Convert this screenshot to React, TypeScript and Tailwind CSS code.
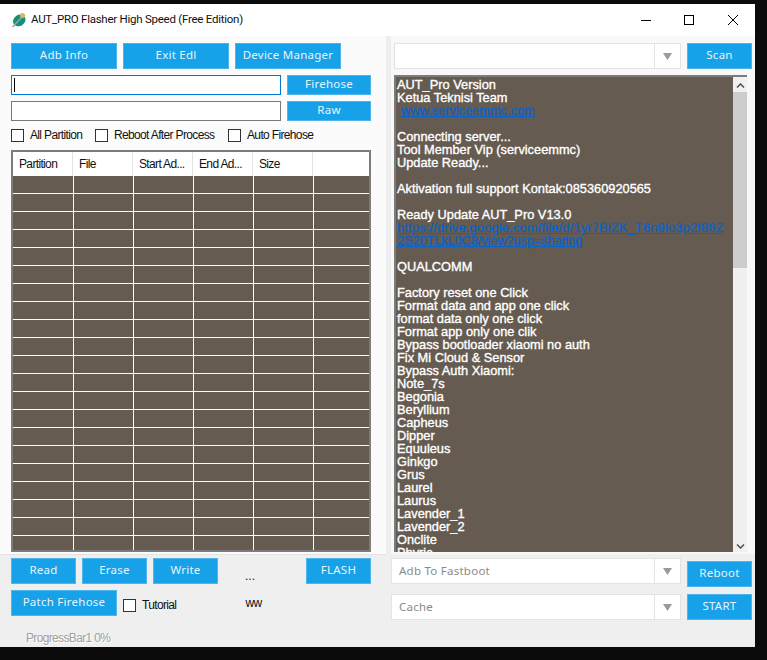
import React from 'react';

const title = "font-['Roboto','Liberation_Sans',sans-serif]";
const body = "font-['Liberation_Sans',sans-serif]";
const narrow = `text-[12px] leading-[14px] tracking-[-0.65px] ${body}`;
const ui = "text-[11.5px] tracking-[0.25px] font-['Noto_Sans',sans-serif]";

function Btn({ text, className }: { text: string; className: string }) {
  return (
    <button className={`flex items-center justify-center whitespace-nowrap pb-[2px] bg-[#16a1e9] border border-[#4fb6ec] text-[#e6f5fd] ${ui} ${className}`}>
      {text}
    </button>
  );
}

function Check({ label, className }: { label: string; className?: string }) {
  return (
    <div className={`flex items-center gap-[6px] ${className ?? ''}`}>
      <span className="block w-[13px] h-[13px] border border-[#333] bg-white" />
      <span className={`text-[#111] ${narrow}`}>{label}</span>
    </div>
  );
}

function Combo({ text, className }: { text?: string; className: string }) {
  return (
    <div className={`flex h-[26px] bg-white border border-[#e3e3e3] ${className}`}>
      <div className={`flex-1 flex items-center pl-[7px] text-[#8a8a8a] ${ui}`}>{text}</div>
      <div className="w-[26px] border-l border-[#e3e3e3] flex items-center justify-center">
        <svg width="9" height="7" viewBox="0 0 9 7"><path d="M0 0h9L4.5 7z" fill="#9a9a9a" /></svg>
      </div>
    </div>
  );
}

const cols = ['Partition', 'File', 'Start Ad...', 'End Ad...', 'Size', ''];

const log: { t: string; link?: string; indent?: boolean }[] = [
  { t: 'AUT_Pro Version' },
  { t: 'Ketua Teknisi Team' },
  { t: 'www.serviceemmc.com', link: 'tracking-[0px]', indent: true },
  { t: '' },
  { t: 'Connecting server...' },
  { t: 'Tool Member Vip (serviceemmc)' },
  { t: 'Update Ready...' },
  { t: '' },
  { t: 'Aktivation full support Kontak:085360920565' },
  { t: '' },
  { t: 'Ready Update AUT_Pro V13.0' },
  { t: 'https://drive.google.com/file/d/1yr7BiZK_T6n9lo3p2f86Z', link: 'tracking-[0.2px]' },
  { t: '2S20TLkL0C8/view?usp=sharing', link: 'tracking-[-0.1px]' },
  { t: '' },
  { t: 'QUALCOMM' },
  { t: '' },
  { t: 'Factory reset one Click' },
  { t: 'Format data and app one click' },
  { t: 'format data only one click' },
  { t: 'Format app only one clik' },
  { t: 'Bypass bootloader xiaomi no auth' },
  { t: 'Fix Mi Cloud & Sensor' },
  { t: 'Bypass Auth Xiaomi:' },
  { t: 'Note_7s' },
  { t: 'Begonia' },
  { t: 'Beryllium' },
  { t: 'Capheus' },
  { t: 'Dipper' },
  { t: 'Equuleus' },
  { t: 'Ginkgo' },
  { t: 'Grus' },
  { t: 'Laurel' },
  { t: 'Laurus' },
  { t: 'Lavender_1' },
  { t: 'Lavender_2' },
  { t: 'Onclite' },
  { t: 'Phyric' },
];

export default function App() {
  return (
    <div className="w-[767px] h-[660px] bg-[#0b0b0b] overflow-hidden pt-[4px]">
      <div className="w-[755px] h-[643px] flex flex-col bg-[#efefef]">
        {/* title bar */}
        <div className="h-[32px] bg-white flex items-center shrink-0">
          <svg className="ml-[11px]" width="16" height="16" viewBox="0 0 16 16">
            <ellipse cx="8" cy="8.5" rx="6.5" ry="5.5" fill="#12907c" transform="rotate(-35 8 8)" />
            <path d="M1.5 15L11 5" stroke="#9aa59a" strokeWidth="1.5" />
            <circle cx="11.5" cy="3.5" r="2.6" fill="#d4b56c" />
          </svg>
          <span className={`ml-[4px] text-[11.5px] tracking-[-0.25px] text-[#111] ${title}`}>AUT_PRO Flasher High Speed (Free Edition)</span>
          <div className="ml-auto flex items-center">
            <span className="block w-[10px] h-px bg-black mr-[33px]" />
            <span className="block w-[10px] h-[10px] border border-black mr-[34px]" />
            <svg className="mr-[17px]" width="10" height="10" viewBox="0 0 10 10"><path d="M0 0l10 10M10 0L0 10" stroke="#000" strokeWidth="1" /></svg>
          </div>
        </div>

        <div className="flex flex-1">
          {/* left */}
          <div className="w-[386px] flex flex-col shrink-0">
            <div className="h-[519px] bg-[#fbfbfb] border-b border-[#e2e2e2] pl-[11px] pt-[7px]">
              <div className="flex gap-[6px]">
                <Btn text="Adb Info" className="w-[106px] h-[26px]" />
                <Btn text="Exit Edl" className="w-[106px] h-[26px]" />
                <Btn text="Device Manager" className="w-[106px] h-[26px]" />
              </div>
              <div className="flex gap-[6px] mt-[6px]">
                <div className="w-[270px] h-[20px] border border-[#0078d7] bg-white flex items-center pl-[2px]">
                  <span className="block w-px h-[14px] bg-black" />
                </div>
                <Btn text="Firehose" className="w-[84px] h-[20px]" />
              </div>
              <div className="flex gap-[6px] mt-[6px]">
                <div className="w-[270px] h-[20px] border border-[#7a7a7a] bg-white" />
                <Btn text="Raw" className="w-[84px] h-[20px]" />
              </div>
              <div className="flex h-[14px] mt-[7px]">
                <Check label="All Partition" className="w-[84px]" />
                <Check label="Reboot After Process" className="w-[133px]" />
                <Check label="Auto Firehose" />
              </div>
              {/* partition table */}
              <div className="w-[360px] h-[402px] mt-[8px] border-2 border-[#7c7c7c] bg-[#655b50] overflow-hidden">
                <div className="flex h-[24px] bg-white">
                  {cols.map((c, i) => (
                    <div key={i} className={`w-[60px] shrink-0 border-r border-[#e3e3e3] pl-[6px] flex items-center text-[#111] ${narrow}`}>{c}</div>
                  ))}
                </div>
                {Array.from({ length: 21 }).map((_, r) => (
                  <div key={r} className="flex h-[18px] pl-[1px] border-b border-[#fafafa]">
                    {cols.map((_, i) => (
                      <div key={i} className="w-[60px] shrink-0 border-r border-[#fafafa]" />
                    ))}
                  </div>
                ))}
              </div>
            </div>
            {/* bottom left */}
            <div className="pl-[11px] pt-[3px] flex-1">
              <div className="flex">
                <Btn text="Read" className="w-[65px] h-[26px] mr-[6px]" />
                <Btn text="Erase" className="w-[65px] h-[26px] mr-[6px]" />
                <Btn text="Write" className="w-[65px] h-[26px]" />
                <span className={`ml-[27px] mt-[11px] text-[12px] leading-[14px] text-[#111] ${body}`}>...</span>
                <Btn text="FLASH" className="w-[65px] h-[26px] ml-auto mr-[15px]" />
              </div>
              <div className="flex mt-[6px]">
                <Btn text="Patch Firehose" className="w-[106px] h-[26px]" />
                <Check label="Tutorial" className="ml-[6px] mt-[5px] h-[20px]" />
                <span className={`ml-[69px] mt-[6px] text-[#111] ${narrow}`}>ww</span>
              </div>
              <div className={`ml-[15px] mt-[15px] text-[#a0a0a0] [text-shadow:1px_1px_0_#fff] ${narrow}`}>ProgressBar1 0%</div>
            </div>
          </div>

          {/* divider */}
          <div className="w-[5px] h-[518px] bg-[#eeeeee] shrink-0" />

          {/* right */}
          <div className="flex-1 flex flex-col">
            <div className="h-[518px] bg-[#f8f8f8] pt-[7px] pl-[3px]">
              <div className="flex gap-[6px]">
                <Combo className="w-[287px]" />
                <Btn text="Scan" className="w-[65px] h-[26px]" />
              </div>
              <div className="w-[353px] h-[477px] mt-[6px] bg-[#655b50] border-t-2 border-l-2 border-[#7c7c7c] flex overflow-hidden">
                <div className={`flex-1 pt-[1px] pl-[1px] text-[12.8px] leading-[13px] text-white [-webkit-text-stroke:0.35px_#fff] ${body}`}>
                  {log.map((l, i) => (
                    <div key={i} className={`h-[13px] whitespace-pre ${l.link ? `text-[#0a63c9] [-webkit-text-stroke:0.3px_#0a63c9] underline ${l.link}` : ''} ${l.indent ? 'pl-[4px]' : ''}`}>{l.t}</div>
                  ))}
                </div>
                <div className="w-[14px] shrink-0 bg-[#f0f0f0] flex flex-col items-center">
                  <svg className="mt-[6px] mb-[4px]" width="9" height="5" viewBox="0 0 9 5"><path d="M1 4.5l3.5-3.5 3.5 3.5" fill="none" stroke="#505050" strokeWidth="1.5" /></svg>
                  <div className="w-[14px] h-[176px] bg-[#cdcdcd]" />
                  <div className="flex-1" />
                  <svg className="mb-[3px]" width="9" height="5" viewBox="0 0 9 5"><path d="M1 .5L4.5 4 8 .5" fill="none" stroke="#505050" strokeWidth="1.5" /></svg>
                </div>
              </div>
            </div>
            <div className="pt-[4px] flex">
              <div className="flex flex-col gap-[10px]">
                <Combo text="Adb To Fastboot" className="w-[290px]" />
                <Combo text="Cache" className="w-[290px]" />
              </div>
              <div className="flex flex-col ml-[6px] pt-[3px] gap-[7px]">
                <Btn text="Reboot" className="w-[65px] h-[26px]" />
                <Btn text="START" className="w-[65px] h-[26px]" />
              </div>
            </div>
          </div>
        </div>
      </div>
    </div>
  );
}
